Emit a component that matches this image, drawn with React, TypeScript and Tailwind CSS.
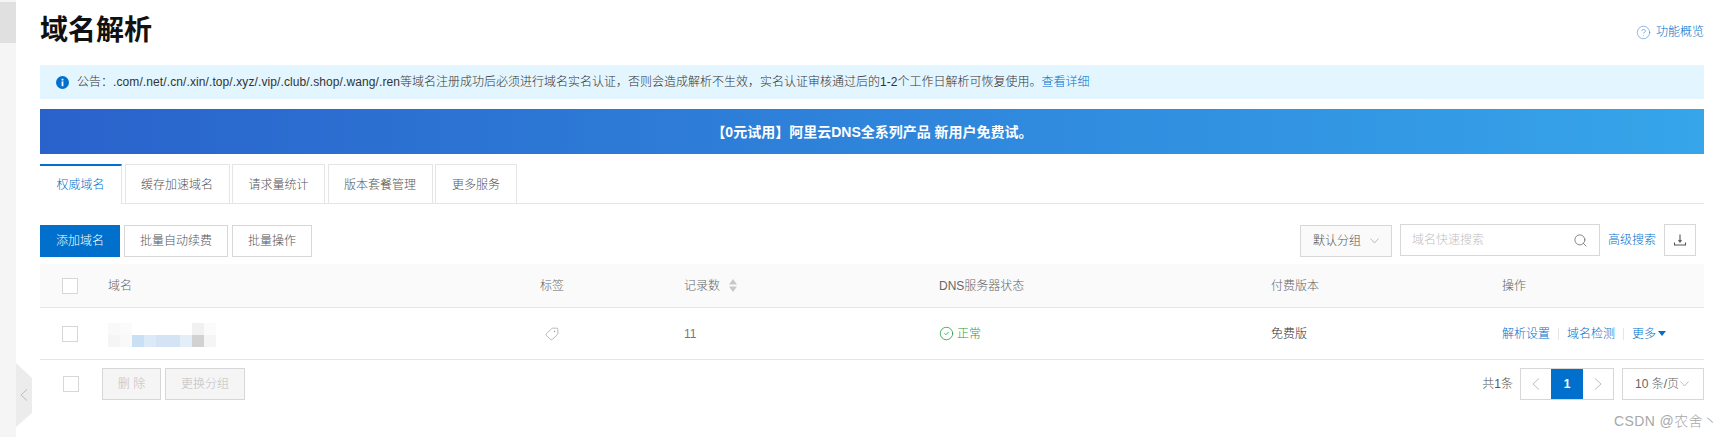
import React from "react";
import { CircleCheck, CircleHelp, Search, Tag } from "lucide-react";

const tabs = [
  { label: "权威域名", width: "w-[82px]" },
  { label: "缓存加速域名", width: "w-[105px]" },
  { label: "请求量统计", width: "w-[93px]" },
  { label: "版本套餐管理", width: "w-[105px]" },
  { label: "更多服务", width: "w-[82px]" },
];

// mosaic that hides the domain name
const blurTop = ["bg-[#f9f9f9]", "bg-[#fbfbfb]", "bg-white", "bg-white", "bg-white", "bg-white", "bg-white", "bg-[#f1f1f1]", "bg-[#fbfbfb]"];
const blurBottom = ["bg-[#f5f5f5]", "bg-[#f9f9f9]", "bg-[#c9dff3]", "bg-[#dce9f6]", "bg-[#d4e4f4]", "bg-[#d4e4f4]", "bg-[#e4eef9]", "bg-[#d2d2d2]", "bg-[#f5f5f5]"];

const rowGrid = "grid grid-cols-[46px_432px_144px_255px_332px_231px_1fr] items-center pl-[22px]";

const Checkbox = () => <div className="w-4 h-4 bg-white border border-[#d7d7d7]" />;

const Caret = ({ className }: { className?: string }) => (
  <svg width="9" height="6" viewBox="0 0 9 6" fill="none" stroke="currentColor" strokeWidth="0.9" className={className}>
    <path d="M0.5 0.5 L4.5 5 L8.5 0.5" />
  </svg>
);

const Arrow = ({ right }: { right?: boolean }) => (
  <svg width="8" height="12" viewBox="0 0 8 12" fill="none" stroke="#b5b5b5" strokeWidth="0.9">
    <path d={right ? "M1 0.5 L7 6 L1 11.5" : "M7 0.5 L1 6 L7 11.5"} />
  </svg>
);

const App: React.FC = () => {
  return (
    <div className="relative flex h-[437px] w-[1723px] overflow-hidden bg-white text-xs font-light text-[#555] font-['Liberation_Sans','Noto_Sans_CJK_SC',sans-serif]">
      {/* Left rail */}
      <div className="w-4 shrink-0 bg-[#f5f5f5] pt-[2px]">
        <div className="h-[41px] bg-[#e0e0e0]" />
      </div>

      {/* Collapse handle */}
      <div className="absolute left-4 top-[363px] w-4 h-16 flex items-center justify-center">
        <svg className="absolute inset-0" width="16" height="64" viewBox="0 0 16 64">
          <path d="M0 0 L16 15 L16 50 L0 64 Z" fill="#ececec" />
        </svg>
        <span className="relative">
          <Arrow />
        </span>
      </div>

      <main className="w-[1664px] ml-6 shrink-0">
        {/* Title */}
        <div className="flex items-center justify-between h-[65px] pb-[3px]">
          <h1 className="text-[28px] leading-[36px] font-bold text-[#111]">域名解析</h1>
          <a className="flex items-center gap-[5px] pt-[2px] text-[#0070cc]">
            <CircleHelp size={15} strokeWidth={1} className="text-[#4a8fd6]" />
            功能概览
          </a>
        </div>

        {/* Notice */}
        <div className="flex items-center h-[34px] pl-4 bg-[#e3f6ff] text-[#333]">
          <svg width="13" height="13" viewBox="0 0 13 13" className="mr-2">
            <circle cx="6.5" cy="6.5" r="6.5" fill="#0070cc" />
            <rect x="5.6" y="5.4" width="1.8" height="4.8" fill="#fff" />
            <rect x="5.6" y="2.8" width="1.8" height="1.7" fill="#fff" />
          </svg>
          <span>
            公告：
            <span className="tracking-[0.1px]">.com/.net/.cn/.xin/.top/.xyz/.vip/.club/.shop/.wang/.ren</span>
            等域名注册成功后必须进行域名实名认证，否则会造成解析不生效，实名认证审核通过后的1-2个工作日解析可恢复使用。
          </span>
          <a className="text-[#0070cc]">查看详细</a>
        </div>

        {/* Banner */}
        <div className="flex items-center justify-center h-[45px] mt-[10px] bg-gradient-to-r from-[#2a62cb] to-[#36a5ea] text-sm font-bold text-white">
          【0元试用】阿里云DNS全系列产品 新用户免费试。
        </div>

        {/* Tabs */}
        <div className="flex gap-[2.5px] h-10 mt-[10px] border-b border-[#e5e5e5]">
          {tabs.map((tab, i) => (
            <div
              key={tab.label}
              className={[
                "flex items-center justify-center h-10 border-r",
                tab.width,
                i === 0
                  ? "border-t-2 border-t-[#0070cc] border-r-[#e5e5e5] bg-white text-[#0070cc]"
                  : "border-t border-l border-[#e5e5e5] text-[#555]",
              ].join(" ")}
            >
              {tab.label}
            </div>
          ))}
        </div>

        {/* Toolbar */}
        <div className="flex items-start justify-between h-10 mt-[20px] pr-2">
          <div className="flex gap-1 pt-px">
            <button className="w-20 h-8 bg-[#0070cc] text-white">添加域名</button>
            <button className="w-[104px] h-8 border border-[#d7d7d7] text-[#555]">批量自动续费</button>
            <button className="w-20 h-8 border border-[#d7d7d7] text-[#555]">批量操作</button>
          </div>
          <div className="flex items-start">
            <div className="flex items-center justify-between w-[92px] h-8 mt-px pl-3 pr-3 bg-[#fafafa] border border-[#d7d7d7]">
              默认分组
              <Caret className="text-[#b5b5b5]" />
            </div>
            <div className="flex items-center justify-between w-[200px] h-8 ml-2 pl-[11px] pr-[11px] border border-[#d7d7d7] text-[#c0c0c0]">
              域名快速搜索
              <Search size={15} strokeWidth={1.25} className="text-[#666]" />
            </div>
            <a className="ml-2 h-8 leading-8 text-[#0070cc]">高级搜索</a>
            <div className="flex items-center justify-center w-8 h-8 ml-2 border border-[#d7d7d7]">
              <svg width="14" height="14" viewBox="0 0 14 14" fill="none" stroke="#555" strokeWidth="1.1">
                <path d="M7 1.5 V8.5 M5.5 7 L7 9 L8.5 7 M1.5 9.5 V12 H12.5 V9.5" />
              </svg>
            </div>
          </div>
        </div>

        {/* Table head */}
        <div className={`${rowGrid} h-[44px] bg-[#fafafa] border-b border-[#e5e5e5] text-[#666]`}>
          <Checkbox />
          <div>域名</div>
          <div>标签</div>
          <div className="flex items-center gap-[9px]">
            记录数
            <svg width="8" height="13" viewBox="0 0 8 13" fill="#c8c8c8">
              <path d="M4 0 L8 5.5 H0 Z M0 7.5 H8 L4 13 Z" />
            </svg>
          </div>
          <div>DNS服务器状态</div>
          <div>付费版本</div>
          <div>操作</div>
        </div>

        {/* Table row */}
        <div className={`${rowGrid} h-[52px] border-b border-[#e5e5e5]`}>
          <Checkbox />
          <div className="grid grid-cols-[repeat(9,12px)] grid-rows-[12px_12px] pt-[2px]">
            {blurTop.map((c, i) => (
              <div key={`t${i}`} className={c} />
            ))}
            {blurBottom.map((c, i) => (
              <div key={`b${i}`} className={c} />
            ))}
          </div>
          <div className="pl-[5px]">
            <Tag size={14} strokeWidth={1} className="rotate-90 text-[#888]" />
          </div>
          <div className="text-[#777]">11</div>
          <div className="flex items-center gap-[3px] text-[#1e9a3e]">
            <CircleCheck size={15} strokeWidth={1.25} />
            正常
          </div>
          <div className="text-[#333]">免费版</div>
          <div className="flex items-center text-[#0070cc]">
            <a>解析设置</a>
            <span className="w-px h-3 mx-2 bg-[#e5e5e5]" />
            <a>域名检测</a>
            <span className="w-px h-3 mx-2 bg-[#e5e5e5]" />
            <a>更多</a>
            <svg width="8" height="5" viewBox="0 0 8 5" fill="#0070cc" className="ml-[2px]">
              <path d="M0 0 H8 L4 5 Z" />
            </svg>
          </div>
        </div>

        {/* Footer */}
        <div className="flex items-start justify-between pt-2 pl-[23px]">
          <div className="flex items-center">
            <Checkbox />
            <button className="w-[59px] h-8 ml-[23px] bg-[#f5f5f5] border border-[#d7d7d7] text-[#c0c0c0]">删 除</button>
            <button className="w-20 h-8 ml-1 bg-[#f5f5f5] border border-[#d7d7d7] text-[#c0c0c0]">更换分组</button>
          </div>
          <div className="flex items-center">
            <span className="mr-[7px] text-[#555]">共1条</span>
            <div className="flex items-stretch h-8 border border-[#d7d7d7]">
              <div className="flex items-center justify-center w-[30px]">
                <Arrow />
              </div>
              <div className="flex items-center justify-center w-8 bg-[#0070cc] font-bold text-white">1</div>
              <div className="flex items-center justify-center w-[30px]">
                <Arrow right />
              </div>
            </div>
            <div className="flex items-center w-[82px] h-8 ml-2 pl-3 border border-[#d7d7d7] text-[#666]">
              10 条/页
              <Caret className="ml-px text-[#b5b5b5]" />
            </div>
          </div>
        </div>
      </main>

      {/* Watermark */}
      <div className="absolute left-[1614px] top-[411px] text-sm leading-5 tracking-[0.4px] text-[#a8a8a8]">CSDN @农舍丶</div>
    </div>
  );
};

export default App;
